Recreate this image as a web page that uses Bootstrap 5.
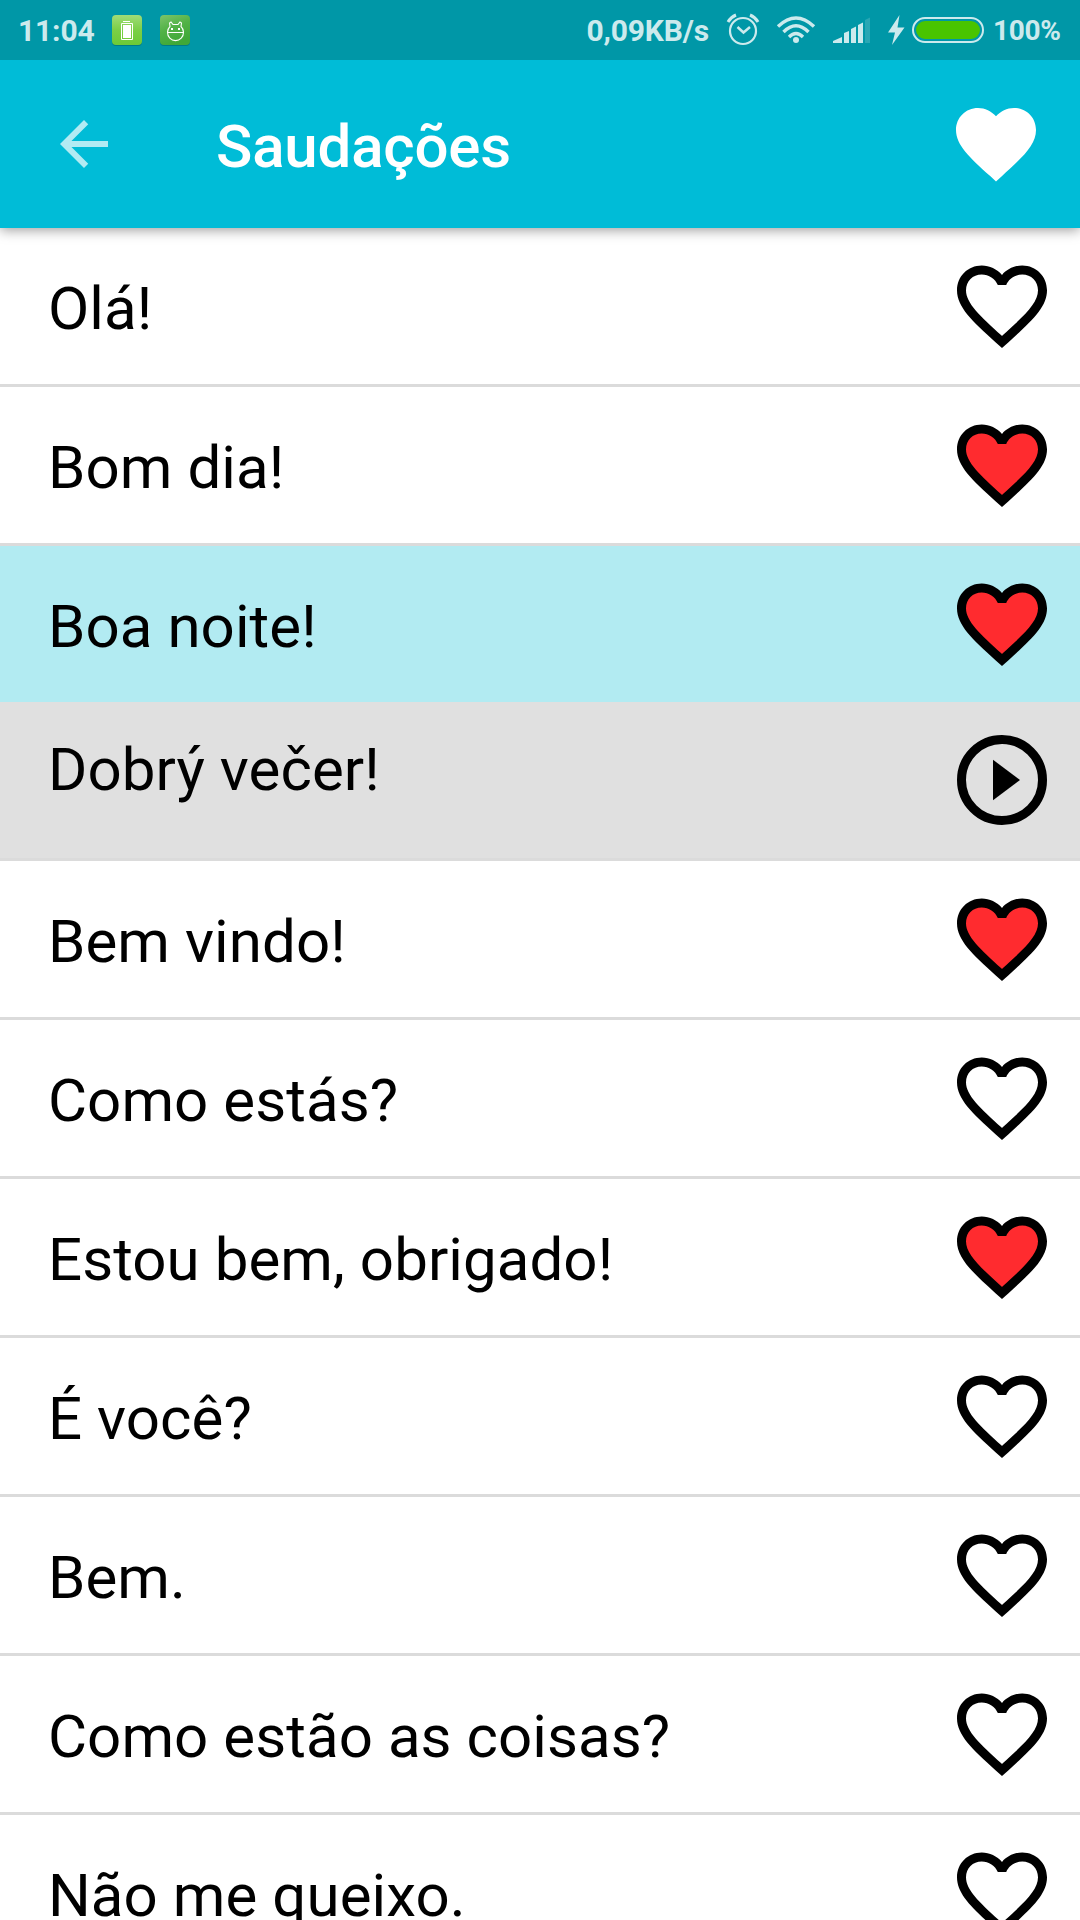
<!DOCTYPE html>
<html lang="pt">
<head>
<meta charset="utf-8">
<meta name="viewport" content="width=device-width, initial-scale=1">
<title>Saudações</title>
<link href="https://cdn.jsdelivr.net/npm/bootstrap@5.3.0/dist/css/bootstrap.min.css" rel="stylesheet">
<style>
body{font-family:Roboto,"Noto Sans",sans-serif;height:1920px;color:#000}
svg{display:block;flex:none}
.status-bar{height:60px;background:#0097a7;color:#cceaed;font-size:30px;font-weight:700;line-height:50px;padding:5px 19px 5px 18px;z-index:3}
.status-bar span{padding-top:1px;letter-spacing:-.15px}
.clock{width:93px}
.rate{margin-right:17px}
.status-bar .pct{width:68px;margin-left:9px;font-size:28px;letter-spacing:-.3px}
.app-bar{height:168px;background:#00bcd7;padding:0 36px 0 48px;box-shadow:0 2px 12px rgba(0,0,0,.4);z-index:2}
.app-title{font-size:60px;font-weight:500;line-height:70px;letter-spacing:-.17px;margin-left:96px;padding-top:5px}
.phrases{height:1692px}
.phrases .phrase{height:159px;flex:none;padding:0 24px 0 48px;border:0 solid #dbdbdb;border-bottom-width:3px;font-size:60px;line-height:70px;color:#000;letter-spacing:.07px}
.phrase-text{padding-top:5px}
.phrases .chosen{height:156px;background:#b2ebf2;border-bottom-width:0}
.phrases .answer{background:#e0e0e0}
.answer .phrase-text{padding:0 0 21px}
</style>
<script src="https://cdn.jsdelivr.net/npm/bootstrap@5.3.0/dist/js/bootstrap.bundle.min.js"></script>
</head>
<body class="bg-white overflow-hidden d-flex flex-column">
<svg width="0" height="0" class="position-absolute" aria-hidden="true">
<defs>
<path id="solid" d="M12 21.35l-1.45-1.32C5.4 15.36 2 12.28 2 8.5 2 5.42 4.42 3 7.5 3c1.74 0 3.41.81 4.5 2.09C13.09 3.81 14.76 3 16.5 3 19.58 3 22 5.42 22 8.5c0 3.78-3.4 6.86-8.55 11.54L12 21.35z"/>
<path id="outline" d="M16.5 3c-1.74 0-3.41.81-4.5 2.09C10.91 3.81 9.24 3 7.5 3 4.42 3 2 5.42 2 8.5c0 3.78 3.4 6.86 8.55 11.54L12 21.35l1.45-1.32C18.6 15.36 22 12.28 22 8.5 22 5.42 19.58 3 16.5 3zm-4.4 15.55l-.1.1-.1-.1C7.14 14.24 4 11.39 4 8.5 4 6.5 5.5 5 7.5 5c1.54 0 3.04.99 3.57 2.36h1.87C13.46 5.99 14.96 5 16.5 5c2 0 3.5 1.5 3.5 3.5 0 2.89-3.14 5.74-7.9 10.05z"/>
<symbol id="heart" viewBox="0 0 24 24"><use href="#outline"/></symbol>
<symbol id="heart-red" viewBox="0 0 24 24"><path fill="#ff2b2f" d="M12 19.6C6 14.4 3 11.6 3 8.5 3 5.8 5 4 7.5 4c1.800 0 3.600 1 4.500 2.600C12.900 5 14.700 4 16.500 4 19 4 21 5.800 21 8.500c0 3.100-3 5.900-9 11.100z"/><use href="#outline"/></symbol>
<linearGradient id="g1" x1="0" y1="0" x2="0" y2="1"><stop stop-color="#a0dc78"/><stop offset=".5" stop-color="#7bcf46"/><stop offset="1" stop-color="#6cca36"/></linearGradient>
<linearGradient id="g2" x1="0" y1="0" x2=".4" y2="1"><stop stop-color="#7cc46a"/><stop offset=".5" stop-color="#52b247"/><stop offset="1" stop-color="#3fa838"/></linearGradient>
</defs>
</svg>

<header class="status-bar d-flex align-items-center flex-shrink-0 position-relative text-nowrap">
  <span class="clock">11:04</span>
  <svg width="32" height="34" viewBox="111 13 32 34"><rect x="112" y="17" width="30" height="29" rx="4" fill="#007b88"/><rect x="112" y="15" width="30" height="30" rx="4" fill="url(#g1)"/><path d="M123 21.500h7M121.500 23.500h11v16h-11z" fill="none" stroke="#fff"/><path d="M123 25h8v13h-8z" fill="#fff"/></svg>
  <svg class="ms-3" width="32" height="34" viewBox="159 13 32 34"><rect x="160" y="17" width="30" height="29" rx="4" fill="#007b88"/><rect x="160" y="15" width="30" height="30" rx="4" fill="url(#g2)"/><path d="M167.500 32.500h16M170 26.500l-.5-3.500 1.500-1 2 2.500h5l2-2.500 1.500 1-.5 3.500a8 8.200 0 1 1-11 0z" fill="none" stroke="#fff" stroke-width="1.100"/><path d="M171 28h2v2h-2zM178 28h2v2h-2z" fill="#fff"/></svg>
  <span class="rate ms-auto">0,09KB/s</span>
  <svg width="34" height="34" viewBox="726 13 34 34" fill="none" stroke="#cceaed"><circle cx="743" cy="31" r="13" stroke-width="2.200"/><path d="M737.500 27l6 5.500 6.500-5.500" stroke-width="2.500"/><path d="M728 22q3-5 8-7M750 15q5 2 8 7" stroke-width="3"/></svg>
  <svg class="ms-3" width="40" height="34" viewBox="776 13 40 34" fill="none" stroke="#cceaed" stroke-width="3.400"><path d="M778 26.500q18-17 36 0M783.500 32q12.500-12.500 25 0M789 37q7-7 14 0"/><circle cx="796" cy="40" r="3" fill="#cceaed" stroke="none"/></svg>
  <svg width="56" height="34" viewBox="816 13 56 34" fill="#cceaed"><path d="M833 43v-2l9-4v6zM844 33l5-2v12h-5zM851 29l5-2.500V43h-5zM858 25l5-2.500V43h-5z"/><path d="M865 20l5-2.500V43h-5z" opacity=".2"/></svg>
  <svg width="112" height="34" viewBox="872 13 112 34"><path d="M899.500 15L888 32.500h7L892 45l12.500-17.500h-7z" fill="#cceaed"/><rect x="913" y="18" width="70" height="24" rx="12" fill="none" stroke="#cceaed" stroke-width="2"/><rect x="916" y="21" width="64" height="18" rx="9" fill="#49c400"/></svg>
  <span class="pct">100%</span>
</header>

<nav class="app-bar d-flex align-items-center flex-shrink-0 position-relative text-white">
  <svg width="72" height="72" viewBox="0 0 24 24" role="img" aria-label="Voltar"><path d="M20 11H7.830l5.590-5.590L12 4l-8 8 8 8 1.410-1.410L7.830 13H20v-2z" fill="#b2ebf3"/></svg>
  <h1 class="app-title mb-0">Saudações</h1>
  <svg class="ms-auto" width="96" height="96" viewBox="0 0 24 24" fill="#fff"><use href="#solid"/></svg>
</nav>

<main class="phrases list-group rounded-0 overflow-hidden">
  <div class="phrase list-group-item d-flex align-items-center justify-content-between"><span class="phrase-text">Olá!</span><svg width="108" height="108"><use href="#heart"/></svg></div>
  <div class="phrase list-group-item d-flex align-items-center justify-content-between"><span class="phrase-text">Bom dia!</span><svg width="108" height="108"><use href="#heart-red"/></svg></div>
  <div class="phrase chosen list-group-item d-flex align-items-center justify-content-between"><span class="phrase-text">Boa noite!</span><svg width="108" height="108"><use href="#heart-red"/></svg></div>
  <div class="phrase answer list-group-item d-flex align-items-center justify-content-between"><span class="phrase-text">Dobrý večer!</span><svg width="108" height="108" viewBox="0 0 24 24"><circle cx="12" cy="12" r="9" fill="none" stroke="#000" stroke-width="2"/><path d="M10 16.500l6-4.500-6-4.500z"/></svg></div>
  <div class="phrase list-group-item d-flex align-items-center justify-content-between"><span class="phrase-text">Bem vindo!</span><svg width="108" height="108"><use href="#heart-red"/></svg></div>
  <div class="phrase list-group-item d-flex align-items-center justify-content-between"><span class="phrase-text">Como estás?</span><svg width="108" height="108"><use href="#heart"/></svg></div>
  <div class="phrase list-group-item d-flex align-items-center justify-content-between"><span class="phrase-text">Estou bem, obrigado!</span><svg width="108" height="108"><use href="#heart-red"/></svg></div>
  <div class="phrase list-group-item d-flex align-items-center justify-content-between"><span class="phrase-text">É você?</span><svg width="108" height="108"><use href="#heart"/></svg></div>
  <div class="phrase list-group-item d-flex align-items-center justify-content-between"><span class="phrase-text">Bem.</span><svg width="108" height="108"><use href="#heart"/></svg></div>
  <div class="phrase list-group-item d-flex align-items-center justify-content-between"><span class="phrase-text">Como estão as coisas?</span><svg width="108" height="108"><use href="#heart"/></svg></div>
  <div class="phrase list-group-item d-flex align-items-center justify-content-between"><span class="phrase-text">Não me queixo.</span><svg width="108" height="108"><use href="#heart"/></svg></div>
</main>
</body>
</html>
